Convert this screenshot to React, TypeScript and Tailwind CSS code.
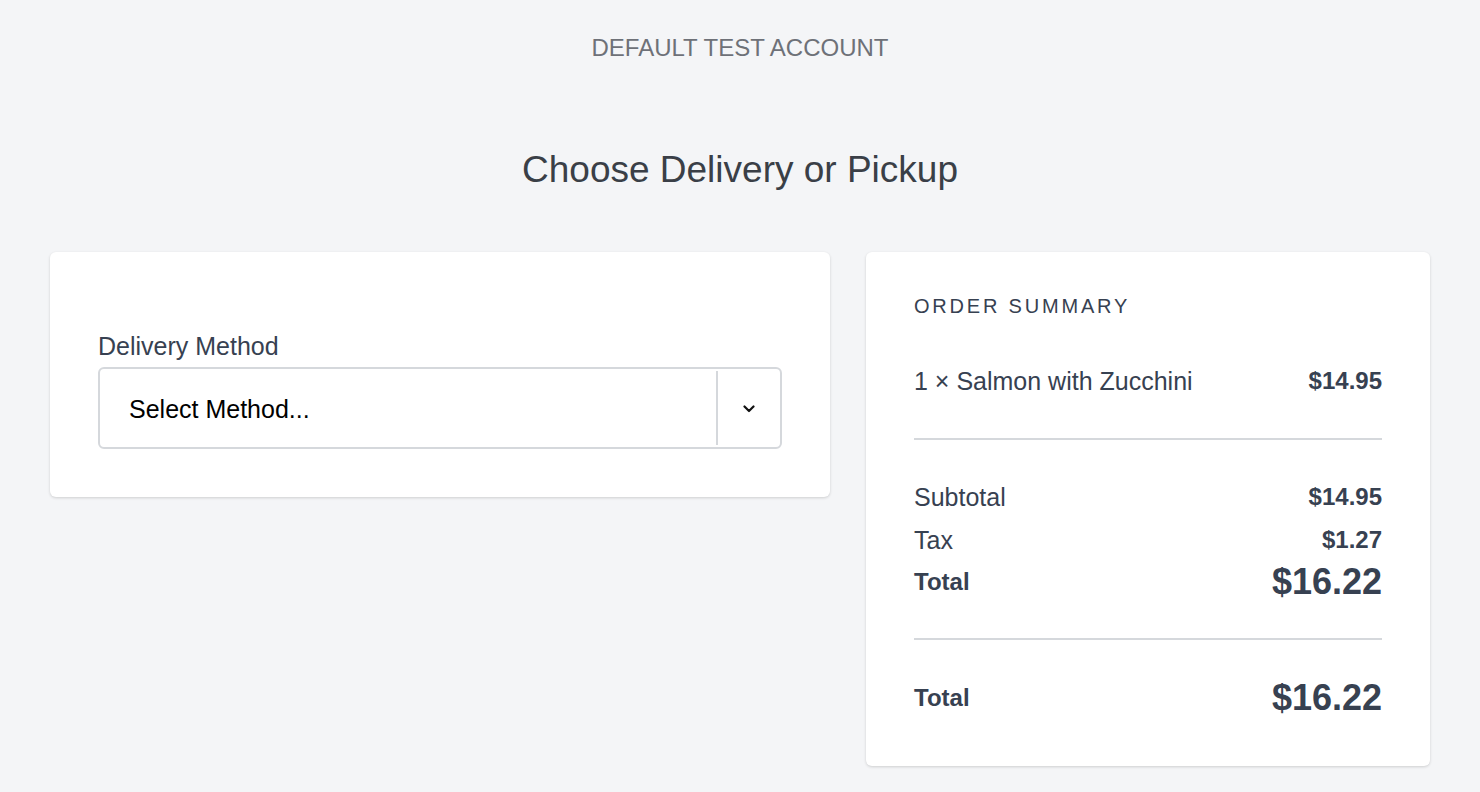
import React from "react";

const font = { fontFamily: '"Liberation Sans", Arial, sans-serif' };

function Row({ label, value, bold = false, big = false }: { label: string; value: string; bold?: boolean; big?: boolean }) {
  return (
    <div className="flex items-center justify-between">
      <span className={bold ? "text-[24px] leading-8 font-bold" : "text-[25px] leading-8"}>{label}</span>
      <span className={big ? "text-[36px] leading-10 font-bold" : "text-[24px] leading-8 font-bold"}>{value}</span>
    </div>
  );
}

export default function App() {
  return (
    <div className="min-h-[792px] bg-[#f4f5f7] text-[#374151]" style={font}>
      <div className="pt-8 text-center text-[24px] leading-8 text-[#6e7178]">DEFAULT TEST ACCOUNT</div>
      <h1 className="mt-[84px] text-center text-[37px] leading-[44px] text-[#3a3f47]">Choose Delivery or Pickup</h1>

      <div className="mt-[60px] grid grid-cols-[780px_564px] items-start gap-[36px] px-[50px]">
        {/* Delivery method */}
        <div className="rounded-md bg-white px-[48px] pt-[78px] pb-[48px] shadow-[0_1px_3px_rgba(0,0,0,0.16)]">
          <label className="block text-[25px] leading-8">Delivery Method</label>
          <div className="mt-[5px] flex h-[82px] items-stretch rounded-md border-2 border-[#d5d8dc]">
            <div className="flex flex-1 items-center pt-[4px] pl-[29px] text-[25px] text-black">Select Method...</div>
            <div className="my-[2px] w-[2px] bg-[#d5d8dc]" />
            <div className="flex w-[62px] items-center justify-center pt-[2px]">
              <svg width="12" height="8" viewBox="0 0 12 8" fill="none">
                <path d="M1.5 1.5L6 6L10.5 1.5" stroke="#111" strokeWidth="2.2" strokeLinecap="round" strokeLinejoin="round" />
              </svg>
            </div>
          </div>
        </div>

        {/* Order summary */}
        <div className="rounded-md bg-white px-[48px] pt-[40px] pb-[48px] shadow-[0_1px_3px_rgba(0,0,0,0.16)]">
          <div className="text-[20px] leading-7 tracking-[2.8px]">ORDER SUMMARY</div>
          <div className="mt-[45px]">
            <Row label="1 × Salmon with Zucchini" value="$14.95" />
          </div>
          <div className="mt-[41px] border-t-2 border-[#d5d8dc]" />
          <div className="mt-[41px]">
            <Row label="Subtotal" value="$14.95" />
          </div>
          <div className="mt-[11px]">
            <Row label="Tax" value="$1.27" />
          </div>
          <div className="mt-[6px]">
            <Row label="Total" value="$16.22" bold big />
          </div>
          <div className="mt-[36px] border-t-2 border-[#d5d8dc]" />
          <div className="mt-[38px]">
            <Row label="Total" value="$16.22" bold big />
          </div>
        </div>
      </div>
    </div>
  );
}
